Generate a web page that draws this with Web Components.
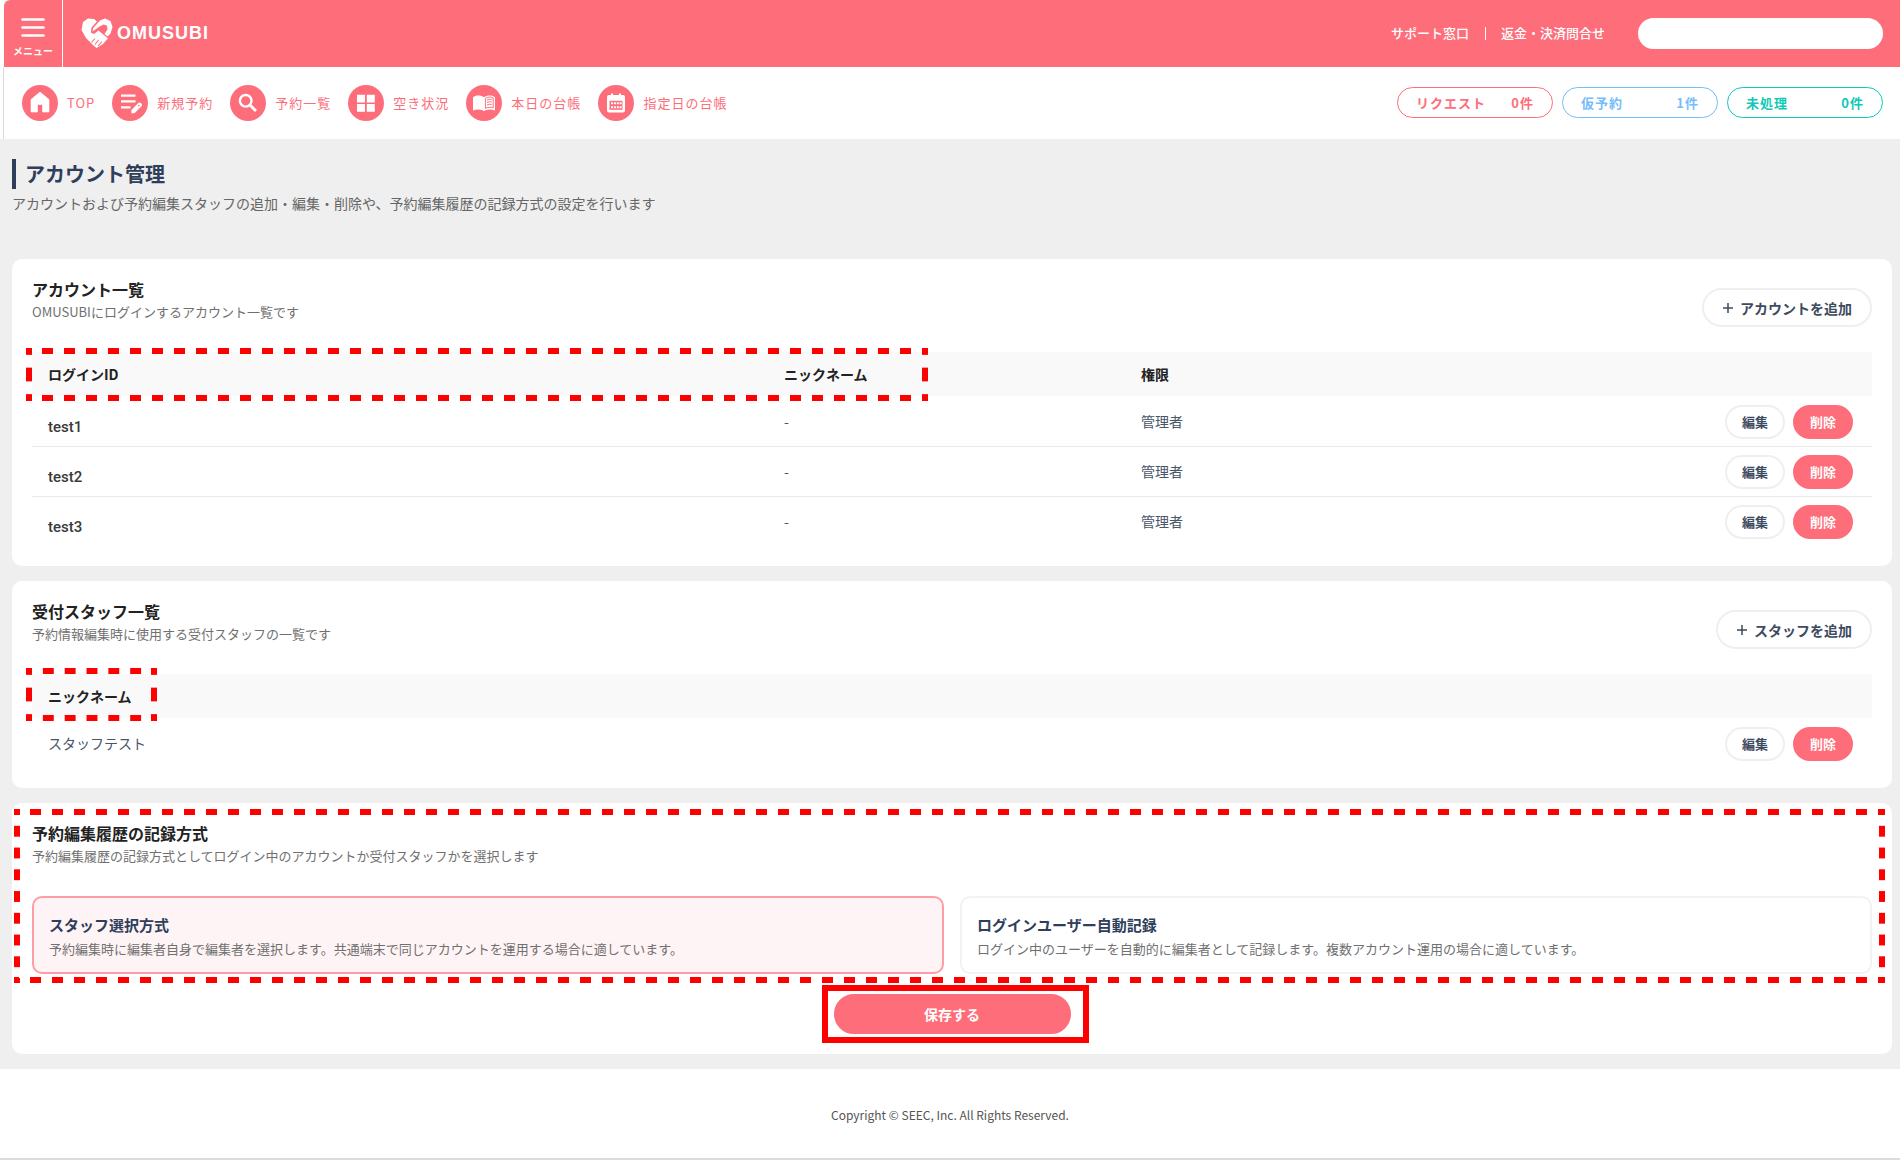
<!DOCTYPE html>
<html lang="ja">
<head>
<meta charset="utf-8">
<title>アカウント管理 | OMUSUBI</title>
<style>
  body{
    margin: 0;
    background: #fff;
    color: #333;
    font-family: "Noto Sans CJK JP", "Noto Sans", sans-serif;
    font-size: 14px;
  }
  main{
    display: flex;
    flex-direction: column;
    gap: 15px;
    padding: 20px 8px 15px 12px;
    background: #efefef;
  }
</style>
</head>
<body>

<app-header></app-header>

<app-nav>
  <nav-item icon="home">TOP</nav-item>
  <nav-item icon="edit">新規予約</nav-item>
  <nav-item icon="search">予約一覧</nav-item>
  <nav-item icon="grid">空き状況</nav-item>
  <nav-item icon="book">本日の台帳</nav-item>
  <nav-item icon="calendar">指定日の台帳</nav-item>
  <count-badge slot="counts" color="#fd6e7a" count="0件">リクエスト</count-badge>
  <count-badge slot="counts" color="#76bdfb" count="1件">仮予約</count-badge>
  <count-badge slot="counts" color="#0fc9b7" count="0件">未処理</count-badge>
</app-nav>

<main>
  <page-title heading="アカウント管理">アカウントおよび予約編集スタッフの追加・編集・削除や、予約編集履歴の記録方式の設定を行います</page-title>

  <panel-card heading="アカウント一覧" sub="OMUSUBIにログインするアカウント一覧です">
    <pill-button slot="action" kind="add">アカウントを追加</pill-button>
    <account-table></account-table>
  </panel-card>

  <panel-card heading="受付スタッフ一覧" sub="予約情報編集時に使用する受付スタッフの一覧です">
    <pill-button slot="action" kind="add">スタッフを追加</pill-button>
    <staff-table></staff-table>
  </panel-card>

  <panel-card heading="予約編集履歴の記録方式" sub="予約編集履歴の記録方式としてログイン中のアカウントか受付スタッフかを選択します" framed>
    <record-method></record-method>
  </panel-card>
</main>

<app-footer></app-footer>

<script>
// base class: every element only has to give its markup
class Base extends HTMLElement{
  constructor() {
    super();
    this.attachShadow({mode: 'open'});
  }
  connectedCallback() {
    this.shadowRoot.innerHTML = this.render();
  }
}

const icons = {
  home: `<path d="M18 7L27 14.5V27H20.5V19.5H15.5V27H9V14.5Z" stroke="#fff" stroke-linejoin="round" stroke-width=".6"/>`,
  edit: `<path d="M9 9.5h14.5v2.2H9zM9 15.3h14.5v2.2H9zM9 21.2h9.5v2.2H9z"/>
    <path d="M19.4 28.6v-3.6l6.6-6.8c1-1 2-1 2.8-.2l.6.6c.8.9.8 1.8 0 2.7l-6.6 6.8z"/>
    <circle cx="26.8" cy="20.6" r=".8" fill="#fd6e7a"/>`,
  search: `<circle cx="15.7" cy="15.8" r="5.8" fill="none" stroke="#fff" stroke-width="2.4"/>
    <path d="M20 20L26 26" stroke="#fff" stroke-width="3"/>`,
  grid: `<path d="M9 9.8h8v7.8H9zM18.8 9.8h8v7.8h-8zM9 19h8v7.8H9zM18.8 19h8v7.8h-8z"/>`,
  book: `<path d="M7 12.2C9.5 9.8 15 9.8 18 12.2C21 9.8 26.5 9.8 29 12.2V25.5C26 24.2 22 24.3 19.5 25.2Q18 26.8 16.5 25.2C14 24.3 10 24.2 7 25.5Z"/>
    <path d="M19.4 13.4C21.5 11.7 25 11.7 27.2 12.8V22.8C24.6 22 21.6 22.2 19.4 23.3Z" fill="none" stroke="#fd6e7a" stroke-width="1"/>
    <path d="M21 15q2.5-1.2 4.8-.6M21 17.5q2.5-1.2 4.8-.6M21 20q2.5-1.2 4.8-.6" fill="none" stroke="#fd6e7a" stroke-width="1"/>`,
  calendar: `<path d="M11 10h2V8.6h2V10h6V8.6h2V10h2q2 0 2 2V25.5q0 2-2 2H11q-2 0-2-2V12q0-2 2-2z"/>
    <path d="M11.5 15.8h13v9h-13z" fill="#fd6e7a"/>
    <path d="M13 17.2h2v2h-2zM15.9 17.2h2v2h-2zM18.8 17.2h2v2h-2zM21.6 17.2h2v2h-2zM13 21.2h2v2h-2zM15.9 21.2h2v2h-2zM18.8 21.2h2v2h-2zM21.6 21.2h2v2h-2z"/>`
};

class AppHeader extends Base{
  render() {
    return `
      <style>
        :host{
          display: flex;
          align-items: center;
          height: 67px;
          margin-left: 4px;
          padding-right: 17px;
          border-radius: 6px 0 0 0;
          background: #fd6e7a;
          color: #fff;
        }
        button{
          display: flex;
          flex-direction: column;
          align-items: center;
          gap: 4px;
          width: 59px;
          height: 100%;
          padding: 18px 0 0;
          border: 0;
          border-right: 1px solid #fff;
          background: none;
          color: inherit;
          font: bold 10px/18px "Noto Sans CJK JP", sans-serif;
        }
        .logo{
          display: flex;
          align-items: center;
          gap: 4px;
          margin: 0 auto 0 18px;
          padding-bottom: 1px;
          font: bold 18px/20px "Liberation Sans", sans-serif;
          letter-spacing: 1px;
        }
        a{
          color: inherit;
          text-decoration: none;
        }
        .links{
          display: flex;
          align-items: center;
          padding-bottom: 2px;
          font-size: 13px;
          font-weight: 500;
        }
        .links a + a{
          position: relative;
          margin-left: 16px;
          padding-left: 16px;
        }
        .links a + a::before{
          content: "";
          position: absolute;
          left: 0;
          top: 4px;
          bottom: 2px;
          border-left: 1px solid #fff;
        }
        input{
          box-sizing: border-box;
          width: 245px;
          height: 31px;
          margin-left: 33px;
          padding: 0 16px;
          border: 0;
          border-radius: 16px;
          background: #fff;
          font: inherit;
        }
      </style>
      <button type="button">
        <svg width="24" height="20" viewBox="0 0 24 20" stroke="#fff" stroke-width="2.6" stroke-linecap="round">
          <path d="M1.5 1.5H22.5M1.5 9.5H22.5M1.5 17.5H22.5"/>
        </svg>
        メニュー
      </button>
      <a class="logo" href="#">
        <svg width="32" height="31" viewBox="0 0 32 31" fill="#fff">
          <path d="M2 4L7 .5L13 1L16 3.5L10.5 9.5L9.8 14.5L13 16L17.5 12.5L27 20.5L25 22.5L22 26L15.5 30L12.5 27.5L5 20L.5 12Z"/>
          <path d="M11.5 13.5L12.2 10L19 2.5L24 .5L29.5 3L31.5 9L29.5 15.5L26.5 18.5L23.5 16L26.5 11.5L26 7.5L22.5 6.5L18.5 8.5Z"/>
          <path d="M14 20.5L10.5 24.5M17.5 22L14 26.5M21 23.5L17 28" stroke="#fd6e7a" stroke-width="1.1"/>
        </svg>
        OMUSUBI
      </a>
      <div class="links">
        <a href="#">サポート窓口</a>
        <a href="#">返金・決済問合せ</a>
      </div>
      <input type="search" aria-label="検索">
    `;
  }
}

class AppNav extends Base{
  render() {
    return `
      <style>
        :host{
          display: flex;
          align-items: center;
          justify-content: space-between;
          height: 72px;
          margin-left: 3px;
          padding: 0 17px 0 18px;
          border-left: 1px solid #d8d8d8;
          box-sizing: border-box;
        }
        nav{
          display: flex;
          gap: 17px;
        }
        .counts{
          display: flex;
          gap: 9px;
          padding-bottom: 1px;
        }
      </style>
      <nav><slot></slot></nav>
      <div class="counts"><slot name="counts"></slot></div>
    `;
  }
}

class NavItem extends Base{
  render() {
    return `
      <style>
        :host{
          display: block;
        }
        a{
          display: flex;
          align-items: center;
          gap: 9px;
          color: #fd6e7a;
          font-size: 13px;
          letter-spacing: 1px;
          text-decoration: none;
        }
        span{
          padding-bottom: 2px;
        }
      </style>
      <a href="#">
        <svg width="36" height="36" viewBox="0 0 36 36" fill="#fff">
          <circle cx="18" cy="18" r="18" fill="#fd6e7a"/>
          ${icons[this.getAttribute('icon')]}
        </svg>
        <span><slot></slot></span>
      </a>
    `;
  }
}

class CountBadge extends Base{
  render() {
    return `
      <style>
        :host{
          display: block;
        }
        a{
          display: flex;
          align-items: center;
          justify-content: space-between;
          box-sizing: border-box;
          width: 156px;
          height: 31px;
          padding: 0 18px 1px;
          border: 1px solid;
          border-radius: 16px;
          color: ${this.getAttribute('color')};
          font-size: 13px;
          font-weight: bold;
          letter-spacing: 1px;
          text-decoration: none;
        }
      </style>
      <a href="#"><slot></slot><span>${this.getAttribute('count')}</span></a>
    `;
  }
}

class PageTitle extends Base{
  render() {
    return `
      <style>
        :host{
          display: block;
          margin-bottom: 30px;
        }
        h1{
          margin: 0;
          padding-left: 9px;
          border-left: 4px solid #2f3e5a;
          color: #2f3e5a;
          font-size: 20px;
          line-height: 30px;
        }
        p{
          margin: 3px 0 0;
          color: #666;
          line-height: 22px;
        }
      </style>
      <h1>${this.getAttribute('heading')}</h1>
      <p><slot></slot></p>
    `;
  }
}

class PanelCard extends Base{
  render() {
    return `
      <style>
        :host{
          display: block;
          position: relative;
          padding: 18px 20px 20px;
          border-radius: 10px;
          background: #fff;
        }
        header{
          display: flex;
          align-items: flex-end;
          justify-content: space-between;
          height: 50px;
          margin-bottom: 25px;
        }
        h2{
          margin: 0;
          color: #222;
          font-size: 16px;
          line-height: 24px;
        }
        p{
          margin: 0 0 4px;
          color: #707070;
          font-size: 13px;
          line-height: 22px;
        }
        mark-frame{
          top: 6px;
          left: 2px;
          right: 7px;
          height: 174px;
        }
      </style>
      <header>
        <div>
          <h2>${this.getAttribute('heading')}</h2>
          <p>${this.getAttribute('sub')}</p>
        </div>
        <slot name="action"></slot>
      </header>
      <slot></slot>
      ${this.hasAttribute('framed') ? '<mark-frame></mark-frame>' : ''}
    `;
  }
}

// red dashed frame, every side starts and ends with half a dash
class MarkFrame extends Base{
  render() {
    return `
      <style>
        :host{
          position: absolute;
          pointer-events: none;
          --across: linear-gradient(90deg, #f00 25%, transparent 25% 75%, #f00 75%);
          --down: linear-gradient(#f00 25%, transparent 25% 75%, #f00 75%);
          background:
            var(--across) left top / 22px 6px round no-repeat,
            var(--across) left bottom / 22px 6px round no-repeat,
            var(--down) left top / 6px 22px no-repeat round,
            var(--down) right top / 6px 22px no-repeat round;
        }
      </style>
    `;
  }
}

class PillButton extends Base{
  render() {
    const kind = this.getAttribute('kind');
    const plus = `<svg width="12" height="12" viewBox="0 0 12 12" stroke="#3d4b5f" stroke-width="1.5"><path d="M1 6H11M6 1V11"/></svg>`;
    return `
      <style>
        :host{
          display: block;
        }
        button{
          display: flex;
          align-items: center;
          justify-content: center;
          gap: 6px;
          box-sizing: border-box;
          width: 60px;
          height: 34px;
          padding: 0;
          border: 2px solid #efeff2;
          border-radius: 20px;
          background: #fff;
          color: #3d4b5f;
          font: bold 13px/20px "Noto Sans CJK JP", sans-serif;
        }
        .add{
          width: auto;
          height: 39px;
          padding: 0 18px;
          font-size: 14px;
        }
        .delete, .save{
          border-color: #fd6e7a;
          background: #fd6e7a;
          color: #fff;
        }
        .save{
          width: 237px;
          height: 40px;
          font-size: 14px;
        }
      </style>
      <button type="button" class="${kind}">${kind === 'add' ? plus : ''}<slot></slot></button>
    `;
  }
}

const table_style = `
  :host{
    display: block;
    position: relative;
  }
  table{
    width: 100%;
    border-collapse: collapse;
    table-layout: fixed;
  }
  th, td{
    padding: 0 16px;
    text-align: left;
    line-height: 20px;
  }
  th{
    height: 44px;
    background: #f9f9f9;
    color: #222;
  }
  td{
    box-sizing: border-box;
    height: 50px;
    color: #4a5568;
  }
  tr + tr td{
    border-top: 1px solid #e8e8ee;
  }
  .buttons{
    display: flex;
    justify-content: flex-end;
    gap: 8px;
    padding: 2px 3px 0 0;
  }
`;

const row_buttons = `
  <td>
    <div class="buttons">
      <pill-button kind="edit">編集</pill-button>
      <pill-button kind="delete">削除</pill-button>
    </div>
  </td>
`;

class AccountTable extends Base{
  render() {
    const rows = ['test1', 'test2', 'test3'].map(id => `
      <tr><td class="id">${id}</td><td>-</td><td>管理者</td>${row_buttons}</tr>
    `).join('');
    return `
      <style>
        ${table_style}
        .id{
          padding-top: 12px;
          color: #3a3a3a;
          font: 500 15px/20px Roboto, sans-serif;
        }
        mark-frame{
          top: -4px;
          left: -6px;
          width: 49%;
          height: 53px;
        }
      </style>
      <table>
        <colgroup><col style="width: 40%"><col style="width: 19.4%"><col style="width: 20%"><col></colgroup>
        <thead><tr><th>ログインID</th><th>ニックネーム</th><th>権限</th><th></th></tr></thead>
        <tbody>${rows}</tbody>
      </table>
      <mark-frame></mark-frame>
    `;
  }
}

class StaffTable extends Base{
  render() {
    return `
      <style>
        ${table_style}
        mark-frame{
          top: -6px;
          left: -6px;
          width: 131px;
          height: 53px;
        }
      </style>
      <table>
        <thead><tr><th>ニックネーム</th><th></th></tr></thead>
        <tbody><tr><td>スタッフテスト</td>${row_buttons}</tr></tbody>
      </table>
      <mark-frame></mark-frame>
    `;
  }
}

class RecordMethod extends Base{
  render() {
    return `
      <style>
        :host{
          display: block;
        }
        .options{
          display: grid;
          grid-template-columns: 1fr 1fr;
          gap: 16px;
        }
        label{
          position: relative;
          padding: 15px 15px 11px;
          border: 2px solid #f2f2f4;
          border-radius: 10px;
          color: #707070;
          font-size: 13px;
          line-height: 24px;
        }
        label:has(:checked){
          border-color: #fd9da6;
          background: #fff4f5;
        }
        input{
          position: absolute;
          margin: 0;
          opacity: 0;
        }
        strong{
          display: block;
          color: #2f3e5a;
          font-size: 15px;
        }
        .save{
          position: relative;
          width: 237px;
          margin: 20px auto 0;
        }
        /* solid frame round the save button */
        .save::after{
          content: "";
          position: absolute;
          inset: -9px -18px -9px -12px;
          border: 6px solid #f00;
          pointer-events: none;
        }
      </style>
      <div class="options">
        <label>
          <input type="radio" name="method" checked>
          <strong>スタッフ選択方式</strong>
          予約編集時に編集者自身で編集者を選択します。共通端末で同じアカウントを運用する場合に適しています。
        </label>
        <label>
          <input type="radio" name="method">
          <strong>ログインユーザー自動記録</strong>
          ログイン中のユーザーを自動的に編集者として記録します。複数アカウント運用の場合に適しています。
        </label>
      </div>
      <div class="save"><pill-button kind="save">保存する</pill-button></div>
    `;
  }
}

class AppFooter extends Base{
  render() {
    return `
      <style>
        :host{
          display: block;
          padding: 34px 0 31px;
          border-bottom: 2px solid #dcdcdc;
          color: #555;
          font-size: 12px;
          line-height: 24px;
          text-align: center;
        }
        small{
          font-size: inherit;
        }
      </style>
      <small>Copyright © SEEC, Inc. All Rights Reserved.</small>
    `;
  }
}

window.customElements.define('app-header', AppHeader);
window.customElements.define('app-nav', AppNav);
window.customElements.define('nav-item', NavItem);
window.customElements.define('count-badge', CountBadge);
window.customElements.define('page-title', PageTitle);
window.customElements.define('panel-card', PanelCard);
window.customElements.define('mark-frame', MarkFrame);
window.customElements.define('pill-button', PillButton);
window.customElements.define('account-table', AccountTable);
window.customElements.define('staff-table', StaffTable);
window.customElements.define('record-method', RecordMethod);
window.customElements.define('app-footer', AppFooter);
</script>
</body>
</html>
